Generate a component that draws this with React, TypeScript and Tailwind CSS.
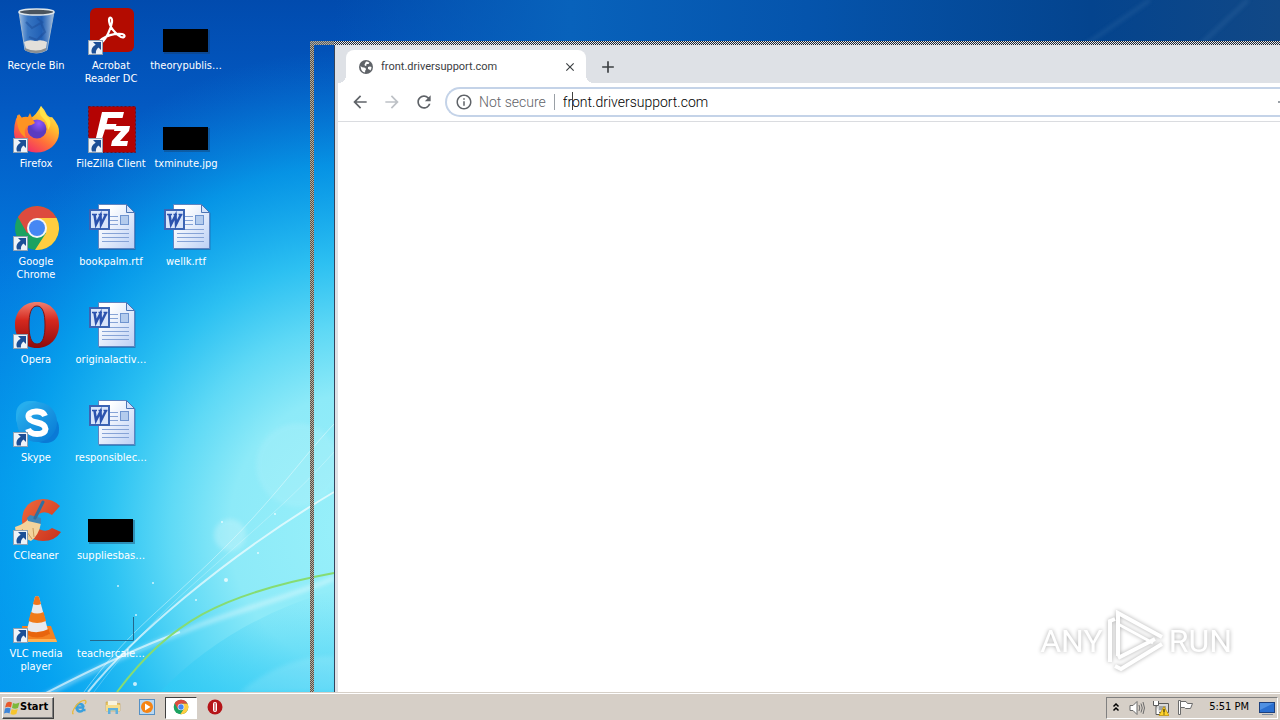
import type { ReactNode } from 'react';
import { clsx } from 'clsx';
import { MdAdd, MdArrowBack, MdArrowForward, MdClose, MdInfoOutline, MdRefresh } from 'react-icons/md';

function Wallpaper() {
  return (
    <svg
      className="absolute inset-0 size-full"
      viewBox="0 0 1280 692"
      preserveAspectRatio="xMinYMin slice"
      aria-hidden="true"
    >
      <defs>
        <linearGradient id="sky" x1="0" y1="0" x2="0" y2="1">
          <stop offset="0" stopColor="#014bae" />
          <stop offset=".15" stopColor="#0359c2" />
          <stop offset=".42" stopColor="#027de2" />
          <stop offset=".7" stopColor="#029bf0" />
          <stop offset="1" stopColor="#029cf6" />
        </linearGradient>
        <radialGradient
          id="glow"
          gradientUnits="userSpaceOnUse"
          cx="0"
          cy="0"
          r="1"
          gradientTransform="translate(350 530) scale(430 480)"
        >
          <stop offset="0" stopColor="#98f0fa" />
          <stop offset=".28" stopColor="#8deaf8" />
          <stop offset=".42" stopColor="#62dcf6" stopOpacity=".96" />
          <stop offset=".56" stopColor="#30c6f3" stopOpacity=".92" />
          <stop offset=".76" stopColor="#08a6ee" stopOpacity=".7" />
          <stop offset="1" stopColor="#0680da" stopOpacity="0" />
        </radialGradient>
        <linearGradient id="dusk" x1="0" y1="0" x2="1" y2="0">
          <stop offset="0" stopColor="#0862bb" stopOpacity="0" />
          <stop offset=".25" stopColor="#0862bb" />
          <stop offset=".5" stopColor="#0554ac" />
          <stop offset=".8" stopColor="#04448e" />
          <stop offset="1" stopColor="#114886" />
        </linearGradient>
        <linearGradient id="floor" x1="0" y1="0" x2="0" y2="1">
          <stop offset="0" stopColor="#2fcbf5" stopOpacity="0" />
          <stop offset="1" stopColor="#2fcbf5" stopOpacity=".6" />
        </linearGradient>
        <filter id="soft" x="-20%" y="-20%" width="140%" height="140%">
          <feGaussianBlur stdDeviation="2" />
        </filter>
      </defs>
      <rect width="1280" height="692" fill="url(#sky)" />
      <rect width="1280" height="692" fill="url(#glow)" />
      <path d="M160 692Q230 620 334 590V692Z" fill="url(#floor)" />
      <rect x="334" width="946" height="46" fill="url(#dusk)" />
      <path d="M1200 45 1248 0M1085 45 1150 0" stroke="#4479ad" strokeWidth="2" opacity=".5" filter="url(#soft)" />
      <circle cx="298" cy="465" r="42" fill="#fff" opacity=".1" filter="url(#soft)" />
      <circle cx="230" cy="535" r="16" fill="#fff" opacity=".22" filter="url(#soft)" />
      <path d="M240 692Q285 655 334 656V692Z" fill="#fff" opacity=".12" filter="url(#soft)" />
      <g fill="none" stroke="#fff">
        <path d="M40 698C110 660 160 640 200 625S310 590 334 578" strokeWidth="4" opacity=".45" filter="url(#soft)" />
        <path d="M46 693C110 660 150 643 180 632" strokeWidth="2" opacity=".6" />
        <path d="M88 692C130 640 220 560 334 492" strokeWidth="2" opacity=".65" />
        <path d="M84 692C130 630 150 620 212 560S300 460 334 424" strokeWidth="1" opacity=".4" />
        <path d="M94 692C140 630 180 596 225 556S300 490 334 452" strokeWidth="1" opacity=".25" />
      </g>
      <path d="M117 692C170 622 220 594 334 573" fill="none" stroke="#86dc72" strokeWidth="2" />
      <g fill="#fff" opacity=".75">
        <circle cx="226" cy="580" r="2" />
        <circle cx="153" cy="583" r="1" />
        <circle cx="136" cy="615" r="1" />
        <circle cx="118" cy="586" r="1" />
        <circle cx="275" cy="514" r="1" />
        <circle cx="258" cy="553" r="1" />
        <circle cx="222" cy="522" r="1" />
        <circle cx="196" cy="600" r="1" />
        <circle cx="135" cy="684" r="2" />
      </g>
    </svg>
  );
}

function ShortcutArrow() {
  return (
    <g>
      <rect x=".5" y="32.5" width="14" height="14" fill="#eef3f8" stroke="#8fa1b3" />
      <path d="M5 34h8v8l-2.500-2.500C8.500 41 7.500 43 8 45.500H4C2.500 41.500 4.500 38.500 7.700 36.700Z" fill="#1c4f96" />
    </g>
  );
}

function RecycleBinIcon() {
  return (
    <g>
      <defs>
        <linearGradient id="bin" x1="0" x2="1">
          <stop offset="0" stopColor="#c8dcf0" stopOpacity=".8" />
          <stop offset=".25" stopColor="#4f86c8" stopOpacity=".7" />
          <stop offset=".65" stopColor="#2d66b5" stopOpacity=".7" />
          <stop offset="1" stopColor="#c6d8ea" stopOpacity=".85" />
        </linearGradient>
      </defs>
      <path d="M6 4 12 42Q24 48 34 42L41 4Z" fill="url(#bin)" stroke="#9db6cf" />
      <path d="M11 34q5-3 11-1 7-2 12 1l-1 7q-9 5-20 0Z" fill="#e3e0da" />
      <path d="M12 40q11 5 21 0v2.500q-10 5-21 0Z" fill="#8b8f92" />
      <path d="M13 14l6 6 9-5 4 9-8 8-8-3M24 10l6 5" stroke="#1c4c98" strokeWidth="2" fill="none" opacity=".5" />
      <ellipse cx="23.500" cy="4" rx="17.500" ry="3" fill="#4a545e" stroke="#dfe6ea" strokeWidth="1.500" />
    </g>
  );
}

function AcrobatIcon() {
  return (
    <g>
      <rect x="2" y="0" width="44" height="44" rx="6" fill="#b30b00" />
      <path
        d="M14 31c-3 2-2 4 0 3 4-3 9-13 10-20 .5-5-3-6-3-2 0 6 6 14 12 17 4 1.500 5-2 1-3-6-.5-14 1-20 5Z"
        fill="none"
        stroke="#fff"
        strokeWidth="2.200"
        strokeLinejoin="round"
      />
    </g>
  );
}

function FirefoxIcon() {
  return (
    <g>
      <defs>
        <linearGradient id="fox" x1=".9" y1="0" x2=".25" y2="1">
          <stop offset="0" stopColor="#fff36b" />
          <stop offset=".35" stopColor="#ffbd2e" />
          <stop offset=".65" stopColor="#ff7139" />
          <stop offset="1" stopColor="#f0246f" />
        </linearGradient>
        <radialGradient id="foxGlobe" cx=".6" cy=".2">
          <stop offset="0" stopColor="#9059ff" />
          <stop offset="1" stopColor="#5b3bc0" />
        </radialGradient>
      </defs>
      <path
        d="M3 13 6 8 9 12Q14 10 18 12Q23 9 28 0Q32 4 34 9Q37 12 39 11Q47 20 46 27A22.500 20 0 0 1 1 26Q1 19 3 13Z"
        fill="url(#fox)"
      />
      <circle cx="24" cy="23" r="9.500" fill="url(#foxGlobe)" />
      <path d="M4 9 8 12Q12 10 15 11L17 7 20 14 22 17Q18 20 14 20 10 24 13 32 3 26 4 9Z" fill="#ff9422" />
      <path d="M28 0q-3 7 1 11 6 5 6 13 6-8-2-15-3-4-5-9Z" fill="#ffe84a" opacity=".8" />
    </g>
  );
}

function FileZillaIcon() {
  return (
    <g>
      <rect x=".5" y=".5" width="47" height="46" fill="#b40303" stroke="#6b1020" strokeDasharray="2 2" />
      <path d="M14 6h22l-1.500 6H20l-1.500 6h10l-1.500 5.500H17L13 36H7Z" fill="#fff" />
      <path d="M27 20h15l-1 5-9 10h8l-1 5H23l1-5 9-10h-7Z" fill="#fff" />
    </g>
  );
}

function ChromeDisc() {
  return (
    <g>
      <circle cx="24" cy="24" r="22" fill="#1ba261" />
      <path d="M24 24V14H43.600A22 22 0 0 0 4.900 13L14 29Z" fill="#dd4b3e" />
      <path d="M22 46 33 29 24 14H43.600A22 22 0 0 1 22 46Z" fill="#ffcd40" />
      <circle cx="24" cy="24" r="10" fill="#f5f5f5" />
      <circle cx="24" cy="24" r="8" fill="#4587f3" />
    </g>
  );
}

function OperaIcon() {
  return (
    <g>
      <defs>
        <linearGradient id="opera" x1="0" y1="0" x2="0" y2="1">
          <stop offset="0" stopColor="#f08070" />
          <stop offset=".4" stopColor="#d5281e" />
          <stop offset="1" stopColor="#8e0b0b" />
        </linearGradient>
      </defs>
      <path
        fillRule="evenodd"
        d="M24 0C38 0 46 10 46 23S37 46 24 46 2 36 2 23 10 0 24 0ZM24 4C18 4 16 12 16 23S18 42 24 42 32 34 32 23 30 4 24 4Z"
        fill="url(#opera)"
      />
      <path d="M24 4C18 4 16 12 16 23S18 42 24 42 32 34 32 23 30 4 24 4Z" fill="none" stroke="#7c1414" />
    </g>
  );
}

function SkypeIcon() {
  return (
    <g>
      <defs>
        <linearGradient id="skype" x1="0" y1="0" x2="1" y2="1">
          <stop offset="0" stopColor="#2cb4ef" />
          <stop offset="1" stopColor="#0678d4" />
        </linearGradient>
      </defs>
      <rect x="3" y="1" width="30" height="30" rx="13" fill="#26aeed" />
      <rect x="18" y="15" width="28" height="28" rx="13" fill="#0a7ad6" />
      <circle cx="24" cy="22" r="20" fill="url(#skype)" />
      <path
        d="M32 16Q30 11 23 11.500 15 12 15.500 17 16 21 24 22.500T32.500 29Q32 34 24 34 17 34 15 29"
        fill="none"
        stroke="#fff"
        strokeWidth="6"
      />
    </g>
  );
}

function CCleanerIcon() {
  return (
    <g>
      <defs>
        <linearGradient id="cc" x1="0" y1="0" x2="1" y2="1">
          <stop offset="0" stopColor="#f06a3c" />
          <stop offset="1" stopColor="#c9301c" />
        </linearGradient>
      </defs>
      <path
        d="M47 8 39 17Q32 12 26 16 21 22 26 31 33 35 39 30L48 34Q42 43 30 43 9 42 9 22 10 2 30 1 40 1 47 8Z"
        fill="url(#cc)"
      />
      <path d="M2 29Q12 26 16 20L28 25Q26 37 18 43L3 36Z" fill="#f3d39c" />
      <path d="M14 34l5 7M20 30l1 9M9 31l6 8" stroke="#c99a5c" />
      <path d="M14 20 17 17 28 20 28 26 15 23Z" fill="#3f86b8" />
      <path d="M22 20 30 4" stroke="#31709f" strokeWidth="3" strokeLinecap="round" />
    </g>
  );
}

function VlcIcon() {
  return (
    <g>
      <path d="M9 30H38L44 46H10Z" fill="#f58220" />
      <path d="M10 43H43L44 46H10Z" fill="#ffb253" />
      <path d="M22 1Q24-1 26 1L36 38Q24 44 13 38Z" fill="#e9e9ec" />
      <path d="M22 1Q24-1 26 1L28 8Q24 10 20 8Z" fill="#f0761d" />
      <path d="M18 16Q24 19 30.500 16L33 25Q24 29 15.500 25Z" fill="#f07a18" />
      <path d="M13.500 34Q24 39 35.500 33L37 38Q24 45 12 38Z" fill="#e8650d" />
    </g>
  );
}

function WordDocIcon() {
  return (
    <g>
      <defs>
        <linearGradient id="sheet" x1="0" y1="0" x2="1" y2="1">
          <stop offset=".2" stopColor="#fff" />
          <stop offset="1" stopColor="#bcd0f5" />
        </linearGradient>
      </defs>
      <path d="M11 1.500H39L47.500 9V46H11Z" fill="#23508f" opacity=".5" />
      <path d="M10.500 .5H38.500L46.500 8.500V44.500H10.500Z" fill="url(#sheet)" stroke="#5f84c0" />
      <path d="M38.500 .5V8.500H46.500Z" fill="#d3e2fa" stroke="#4d74b4" />
      <path
        d="M22 12.500H30M22 16.500H30M22 20.500H30M14 25.500H41M14 29.500H41M14 33.500H41M14 37.500H41"
        stroke="#86a3d6"
      />
      <rect x="32.500" y="11.500" width="8" height="9" fill="#b3cbed" stroke="#6f94cf" />
      <rect x="2" y="6" width="19" height="19" fill="#d8e4fa" stroke="#3c64b4" strokeWidth="2" />
      <path d="M6.500 10.500 8 20.500 12.500 11.500 13 20.500 18 10.500" fill="none" stroke="#2b52ae" strokeWidth="2.500" />
      <path d="M4 10.500H9M10.500 10.500H14M15.500 10.500H19.500" stroke="#2b52ae" strokeWidth="1.500" />
    </g>
  );
}

function BlackImageIcon() {
  return (
    <g>
      <rect x="1" y="22" width="46" height="24" fill="#1a3a60" opacity=".4" />
      <rect x="0" y="21" width="45" height="23" fill="#000" />
    </g>
  );
}

function ClearImageIcon() {
  return <path d="M2 44.500H45.500V21" fill="none" stroke="#23688c" />;
}

type Shortcut = { label: string; icon: ReactNode; linked?: boolean };

// Filled column by column, seven to a column
const columns: Shortcut[][] = [
  [
    { label: 'Recycle Bin', icon: <RecycleBinIcon /> },
    { label: 'Firefox', icon: <FirefoxIcon />, linked: true },
    { label: 'Google\nChrome', icon: <ChromeDisc />, linked: true },
    { label: 'Opera', icon: <OperaIcon />, linked: true },
    { label: 'Skype', icon: <SkypeIcon />, linked: true },
    { label: 'CCleaner', icon: <CCleanerIcon />, linked: true },
    { label: 'VLC media\nplayer', icon: <VlcIcon />, linked: true },
  ],
  [
    { label: 'Acrobat\nReader DC', icon: <AcrobatIcon />, linked: true },
    { label: 'FileZilla Client', icon: <FileZillaIcon />, linked: true },
    { label: 'bookpalm.rtf', icon: <WordDocIcon /> },
    { label: 'originalactiv…', icon: <WordDocIcon /> },
    { label: 'responsiblec…', icon: <WordDocIcon /> },
    { label: 'suppliesbas…', icon: <BlackImageIcon /> },
    { label: 'teachercale…', icon: <ClearImageIcon /> },
  ],
  [
    { label: 'theorypublis…', icon: <BlackImageIcon /> },
    { label: 'txminute.jpg', icon: <BlackImageIcon /> },
    { label: 'wellk.rtf', icon: <WordDocIcon /> },
  ],
];

function DesktopIcons() {
  return (
    <div className="relative flex gap-px">
      {columns.map((items, i) => (
        <div key={i} className="flex w-[74px] flex-col">
          {items.map(({ label, icon, linked }) => (
            <button key={label} type="button" className="flex h-[98px] flex-col items-center gap-[3px] pt-2">
              <svg className="size-12 shrink-0" viewBox="0 0 48 48" aria-hidden="true">
                {icon}
                {linked && <ShortcutArrow />}
              </svg>
              <span className="pr-0.5 text-center text-[11px] leading-[13px] whitespace-pre text-white">{label}</span>
            </button>
          ))}
        </div>
      ))}
    </div>
  );
}

function Watermark() {
  return (
    <div className="absolute right-12 bottom-5 flex items-center gap-1 text-[32px] leading-[60px] text-white drop-shadow-[0_0_2px_#00000055]">
      <span>ANY</span>
      <svg className="h-[62px] w-[58px]" viewBox="0 0 58 62" fill="none" stroke="#fff" strokeWidth="4" aria-hidden="true">
        <path d="M3 52V11L8 9" />
        <path d="M11 46V3L55 27" />
        <path d="M11 14 46 33" strokeWidth="3" />
        <path d="M11 48 48 29M8 56 14 59 55 34" />
      </svg>
      <span>RUN</span>
    </div>
  );
}

function GlobeIcon() {
  return (
    <svg className="size-4" viewBox="0 0 16 16" aria-hidden="true">
      <circle cx="8" cy="8" r="7" fill="#5f6368" />
      <path
        d="M2.500 7Q4 8.500 6 8.500 8 8.500 8 10.500 7 11 7 13.500 3 13 2.500 7ZM8 2.500Q10 2.500 11.500 3.700L10.500 5H8.500V6.500L7 7 6.500 5.500ZM10 8Q12 7 13.500 8 13.500 10 12.300 11.500 11.500 10 10 10Z"
        fill="#fff"
      />
    </svg>
  );
}

function BrowserWindow() {
  return (
    <section
      aria-label="Google Chrome"
      className="absolute top-[41px] right-0 bottom-0 left-[334px] flex flex-col border-l border-[#34445c] bg-[#dee1e6] pl-[3px] font-[Roboto,sans-serif]"
    >
      <div className="flex h-[42px] shrink-0 items-end pl-2">
        <div className="relative flex h-[33px] w-60 items-center rounded-t-lg bg-white pt-px pr-2 pl-3 text-[11px] text-[#3c4043] before:absolute before:bottom-0 before:-left-2 before:size-2 before:bg-[radial-gradient(circle_at_0_0,transparent_8px,white_8px)] after:absolute after:-right-2 after:bottom-0 after:size-2 after:bg-[radial-gradient(circle_at_100%_0,transparent_8px,white_8px)]">
          <GlobeIcon />
          <span className="ml-[7px] flex-1">front.driversupport.com</span>
          <button type="button" aria-label="Close tab" className="grid size-4 place-items-center text-[#3c4043]">
            <MdClose className="size-3.5 stroke-current" />
          </button>
        </div>
        <button type="button" aria-label="New tab" className="mb-1.5 ml-3 text-[#3c4043]">
          <MdAdd className="size-5 stroke-current" />
        </button>
      </div>
      <div className="flex h-[39px] shrink-0 items-center border-b border-[#dadce0] bg-white pl-3 text-[#5f6368]">
        <button type="button" aria-label="Back">
          <MdArrowBack className="size-5 stroke-current" />
        </button>
        <button type="button" aria-label="Forward" disabled className="ml-3 text-[#bdc1c6]">
          <MdArrowForward className="size-5" />
        </button>
        <button type="button" aria-label="Reload" className="ml-3">
          <MdRefresh className="size-5 stroke-current" />
        </button>
        <div className="ml-[11px] flex h-[30px] flex-1 items-center rounded-l-full border-y-2 border-l-2 border-[#c4d3e8] pl-2 text-sm font-light">
          <MdInfoOutline className="size-[18px]" />
          <span className="ml-1.5">Not secure</span>
          <span className="mx-2 h-4 w-px bg-[#9aa0a6]" />
          <div className="relative flex-1">
            <input
              aria-label="Address"
              defaultValue="front.driversupport.com"
              className="w-full bg-transparent text-black outline-none"
            />
            <span className="absolute top-0 left-[9px] h-[18px] w-px bg-[#404040]" />
          </div>
          <span className="size-0.5 bg-[#9aa0a6]" />
        </div>
      </div>
      <main className="relative flex-1 bg-white">
        <Watermark />
      </main>
    </section>
  );
}

// Outline left behind while a window is being dragged
function DragFrame() {
  return (
    <>
      <div className="absolute top-[41px] right-0 left-[334px] h-1 bg-[repeating-conic-gradient(#e8eaee_0_25%,#1c2430_0_50%)] bg-[length:2px_2px]" />
      <div className="absolute top-[41px] left-[310px] h-1 w-6 bg-[repeating-conic-gradient(#b8b09c_0_25%,#4c5a70_0_50%)] bg-[length:2px_2px]" />
      <div className="absolute top-[45px] bottom-0 left-[310px] w-1 bg-[repeating-conic-gradient(#b8b09c_0_25%,#54504e_0_50%)] bg-[length:2px_2px]" />
    </>
  );
}

function InternetExplorerIcon() {
  return (
    <>
      <path
        d="M13 8.500H5.500Q6 5 9 5 12 5 12.700 8.500M5.500 8.500Q6 12.500 9 12.500 11 12.500 12 11H14.500"
        fill="none"
        stroke="#3aa0dd"
        strokeWidth="2.400"
      />
      <path d="M2.500 15Q0 14 4.500 7.500 10 1 14 1.500 16 2 14 5" fill="none" stroke="#e8b93a" strokeWidth="1.300" />
    </>
  );
}

function ExplorerIcon() {
  return (
    <>
      <path d="M1 3h5l1 1.500h8V12H1Z" fill="#e8c667" stroke="#c29b3e" strokeWidth=".5" />
      <path d="M3 2h9v4H3Z" fill="#f7f3de" />
      <path d="M1 6h14v6H1Z" fill="#f5dd8c" />
      <path d="M3 15V9h10v6h-2.500v-3.500h-5V15Z" fill="#5fb0dd" />
    </>
  );
}

function MediaPlayerIcon() {
  return (
    <>
      <rect x=".5" y=".5" width="15" height="15" fill="#b9d8f2" stroke="#5590c4" />
      <circle cx="8" cy="8" r="6" fill="#f58414" />
      <path d="M6 4.500 11.500 8 6 11.500Z" fill="#fff" />
    </>
  );
}

function OperaTaskIcon() {
  return (
    <>
      <circle cx="8" cy="8" r="7.500" fill="#b51418" />
      <rect x="6" y="3" width="4" height="10" rx="2" fill="#fff" />
      <rect x="7.500" y="4" width="1" height="8" fill="#b51418" />
    </>
  );
}

function ChromeTaskIcon() {
  return (
    <g transform="scale(.333)">
      <ChromeDisc />
    </g>
  );
}

const pinned: { name: string; icon: ReactNode; active?: boolean }[] = [
  { name: 'Internet Explorer', icon: <InternetExplorerIcon /> },
  { name: 'Windows Explorer', icon: <ExplorerIcon /> },
  { name: 'Windows Media Player', icon: <MediaPlayerIcon /> },
  { name: 'Google Chrome', icon: <ChromeTaskIcon />, active: true },
  { name: 'Opera', icon: <OperaTaskIcon /> },
];

function Tray() {
  return (
    <div className="flex h-[22px] items-center border border-[#808080] border-r-white border-b-white pr-0.5 pl-1 text-[11px] text-black">
      <button type="button" aria-label="Show hidden icons" className="mr-2">
        <svg className="size-2.5" viewBox="0 0 10 10" fill="none" stroke="#000" strokeWidth="1.500">
          <path d="M2.500 3.500 5 1 7.500 3.500M2.500 7.500 5 5 7.500 7.500" />
        </svg>
      </button>
      <button type="button" aria-label="Volume" className="mr-2">
        <svg className="size-4" viewBox="0 0 16 16" fill="none" stroke="#6b6b6b">
          <path d="M1 5.500H4L8 1.500V14.500L4 10.500H1Z" fill="#fff" />
          <path d="M10 5Q11.500 8 10 11M12 3.500Q14.500 8 12 12.500M14 2Q17 8 14 14" />
        </svg>
      </button>
      <button type="button" aria-label="Network" className="mr-2">
        <svg className="size-4" viewBox="0 0 16 16">
          <path d="M3.500 3.500H15.500V12.500H3.500Z" fill="#d8d8d8" stroke="#5a5a5a" />
          <path d="M6 6H13V10H6Z" fill="#9fa4a8" />
          <path d="M.5 1V5.500H5.500V1M3 5.500V14.500H7" fill="#fff" stroke="#5a5a5a" />
          <path d="M11 6.500 16 15.500H6Z" fill="#ffd42a" stroke="#b78a00" strokeWidth=".7" />
          <path d="M11 9V12.500M11 13.500V14.500" stroke="#000" />
        </svg>
      </button>
      <button type="button" aria-label="Action Center" className="mr-4">
        <svg className="size-4" viewBox="0 0 16 16" fill="#fff" stroke="#6b6b6b">
          <path d="M1.500 .5H3.500V14.500H1.500Z" />
          <path d="M3.500 1.500H9L10.500 3.500H15.500L13.500 8.500H8.500L7.500 7.500H3.500Z" />
        </svg>
      </button>
      <time>5:51 PM</time>
      <button type="button" aria-label="Show desktop" className="ml-2.5">
        <svg className="size-4" viewBox="0 0 16 16">
          <rect x=".5" y="2.500" width="15" height="10" fill="#2a6fd0" stroke="#1c3f7c" />
          <path d="M1 3H15L1 10Z" fill="#69a6ee" opacity=".6" />
          <path d="M3 14.500H14" stroke="#7c8ca0" />
        </svg>
      </button>
    </div>
  );
}

function Taskbar() {
  return (
    <footer className="flex h-7 shrink-0 items-center border-t border-[#d6d0c8] bg-[#d6cfc7] pr-0.5 pl-0.5 shadow-[inset_0_1px_#fff]">
      <button
        type="button"
        className="mt-0.5 flex h-[22px] w-[52px] items-center border border-t-white border-r-[#404040] border-b-[#404040] border-l-white pl-px text-[11px] font-bold text-black shadow-[inset_-1px_-1px_#808080]"
      >
        <svg className="h-4 w-4 shrink-0" viewBox="0 0 16 16" aria-hidden="true">
          <path d="M2.500 3Q5 1 8 2.500L7 7.500Q4 6 1 7.500Z" fill="#e8592b" />
          <path d="M9 3Q12 4.500 15.500 2.500L14 8Q11 9.500 8 8Z" fill="#7db83a" />
          <path d="M1 8.500Q4 7 6.700 8.500L5.500 13.500Q3 12 0 13.500Z" fill="#3f86d8" />
          <path d="M7.700 9Q10 10.500 13.800 9L12.300 14Q9 15.500 6.500 14Z" fill="#f7c52d" />
        </svg>
        Start
      </button>
      <nav aria-label="Pinned programs" className="ml-[9px] flex items-center gap-0.5">
        {pinned.map(({ name, icon, active }) => (
          <button
            key={name}
            type="button"
            aria-label={name}
            className={clsx(
              'mt-0.5 grid h-[22px] w-8 place-items-center border pb-px',
              active ? 'border-t-[#404040] border-r-white border-b-white border-l-[#404040] bg-white' : 'border-transparent'
            )}
          >
            <svg className="size-4" viewBox="0 0 16 16" aria-hidden="true">
              {icon}
            </svg>
          </button>
        ))}
      </nav>
      <div className="mt-0.5 ml-auto">
        <Tray />
      </div>
    </footer>
  );
}

export default function App() {
  return (
    <div className="flex h-screen flex-col overflow-hidden font-['DejaVu_Sans_Condensed','DejaVu_Sans',sans-serif]">
      <div className="relative isolate min-h-0 flex-1 overflow-hidden">
        <Wallpaper />
        <DesktopIcons />
        <BrowserWindow />
        <DragFrame />
      </div>
      <Taskbar />
    </div>
  );
}
